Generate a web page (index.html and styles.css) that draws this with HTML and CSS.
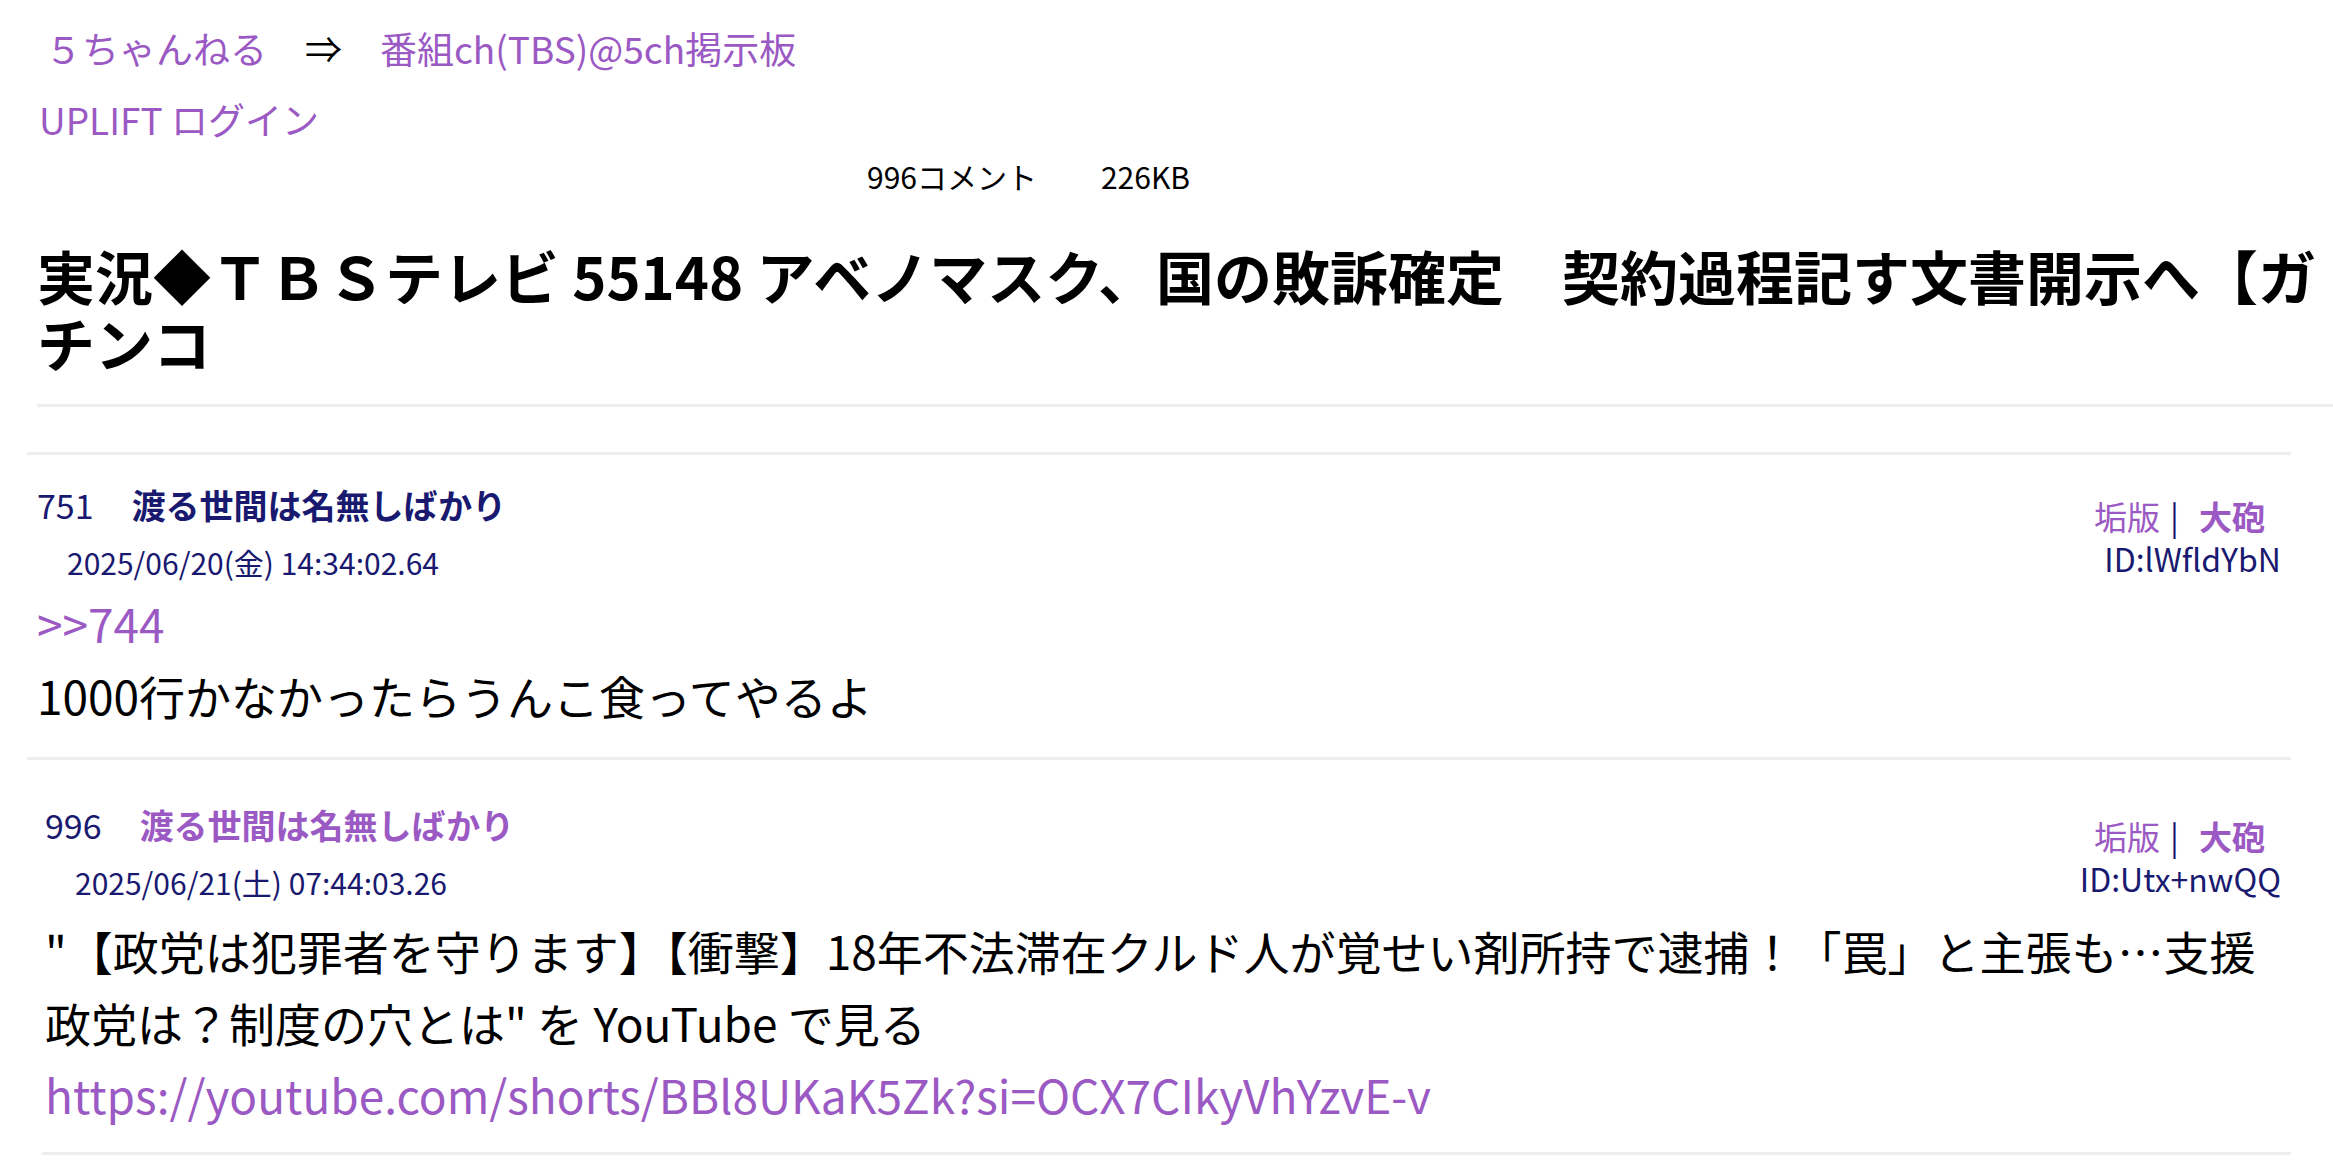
FILE: index.html
```html
<!DOCTYPE html>
<html>
  <head>
    <meta charset="utf-8">
    <title>実況◆ＴＢＳテレビ 55148</title>
    <link rel="stylesheet" href="styles.css">
  </head>
  <body>
    <div class="nav">
      <a href="#">５ちゃんねる</a><span class="arrow">⇒</span><a href="#">番組ch(TBS)@5ch掲示板</a>
    </div>
    <div class="login"><a href="#">UPLIFT ログイン</a></div>
    <div class="info"><span>996コメント</span><span class="size">226KB</span></div>

    <h1 class="title">実況◆ＴＢＳテレビ 55148 アベノマスク、国の敗訴確定　契約過程記す文書開示へ【ガチンコ</h1>

    <div class="thread">
      <div class="post">
        <div class="post-head">
          <div class="post-meta">
            <div class="post-line"><span class="num">751</span><span class="name">渡る世間は名無しばかり</span></div>
            <div class="date">2025/06/20(金) 14:34:02.64</div>
          </div>
          <div class="post-side">
            <div class="side-links"><a href="#">垢版</a><span class="sep">|</span><a class="cannon" href="#">大砲</a></div>
            <div class="uid">ID:lWfldYbN</div>
          </div>
        </div>
        <div class="message">
          <a href="#">&gt;&gt;744</a><br>
          1000行かなかったらうんこ食ってやるよ
        </div>
      </div>

      <div class="post post-last">
        <div class="post-head">
          <div class="post-meta">
            <div class="post-line"><span class="num">996</span><a class="name" href="#">渡る世間は名無しばかり</a></div>
            <div class="date">2025/06/21(土) 07:44:03.26</div>
          </div>
          <div class="post-side">
            <div class="side-links"><a href="#">垢版</a><span class="sep">|</span><a class="cannon" href="#">大砲</a></div>
            <div class="uid">ID:Utx+nwQQ</div>
          </div>
        </div>
        <div class="message">
          "【政党は犯罪者を守ります】【衝撃】18年不法滞在クルド人が覚せい剤所持で逮捕！「罠」と主張も…支援政党は？制度の穴とは" を YouTube で見る<br>
          <a href="#">https://youtube.com/shorts/BBl8UKaK5Zk?si=OCX7CIkyVhYzvE-v</a>
        </div>
      </div>
    </div>
  </body>
</html>
```

FILE: styles.css
```css
body {
  margin: 0;
  background: #fff;
  color: #000;
  font-family: "Noto Sans CJK JP", "Noto Sans", sans-serif;
}
a {
  color: #9b59c4;
  text-decoration: none;
}
.nav {
  padding: 18px 0 0 45px;
  font-size: 37px;
  line-height: 60px;
}
.arrow {
  color: #000;
  margin: 0 38px;
}
.login {
  margin: 11px 0 0 39px;
  font-size: 37px;
  line-height: 60px;
}
.info {
  margin: 7px 0 0 867px;
  font-size: 30px;
  line-height: 40px;
}
.info .size {
  margin-left: 64px;
}
.title {
  margin: 46px 0 0 37px;
  padding-bottom: 28px;
  border-bottom: 3px solid #eee;
  font-size: 58px;
  line-height: 67px;
  font-weight: bold;
}
.thread {
  margin: 45px 42px 0 27px;
  border-top: 3px solid #eee;
}
.post {
  padding: 25px 10px 26px 10px;
  border-bottom: 3px solid #eee;
}
.post-last {
  margin-left: 15px;
  padding: 40px 10px 22px 3px;
}
.post-head {
  display: flex;
  justify-content: space-between;
}
.post-line {
  display: flex;
  gap: 38px;
  font-size: 34px;
  line-height: 50px;
  color: #191970;
}
.name {
  font-weight: bold;
}
.date {
  margin: 12px 0 0 30px;
  font-size: 30px;
  line-height: 40px;
  color: #191970;
}
.post-side {
  padding-top: 15px;
  text-align: right;
  color: #191970;
}
.side-links {
  padding-right: 16px;
  font-size: 33px;
  line-height: 42px;
}
.sep {
  margin: 0 20px 0 10px;
}
.cannon {
  font-weight: bold;
}
.uid {
  margin-top: 2px;
  font-size: 32px;
  line-height: 38px;
}
.message {
  margin-top: 5px;
  font-size: 46px;
  line-height: 72px;
}
.post-last .message {
  margin-top: 12px;
}
```
